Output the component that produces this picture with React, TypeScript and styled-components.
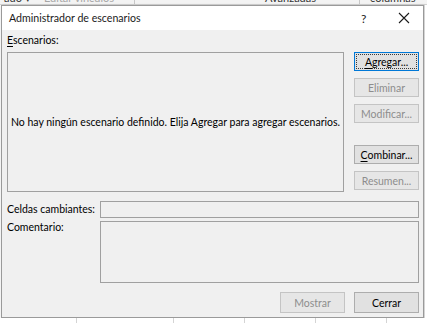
import React from 'react'
import styled, { createGlobalStyle, css } from 'styled-components'

const GlobalStyle = createGlobalStyle`
  html, body {
    margin: 0;
    padding: 0;
  }
  body {
    font-family: Lato, 'Liberation Sans', sans-serif;
  }
`

const Mnemonic = ({ text }: { text: string }) => (
  <>
    <u>{text[0]}</u>
    {text.slice(1)}
  </>
)

const App = () => {
  return (
    <Screen>
      <GlobalStyle />
      <Ribbon>
        <RibbonItem $width={40}>ado ▾</RibbonItem>
        <RibbonItem $muted $width={88}>
          Editar vínculos
        </RibbonItem>
        <RibbonSep />
        <RibbonItem $width={120} />
        <RibbonItem $width={92}>Avanzadas</RibbonItem>
        <RibbonSep />
        <RibbonItem $width={60}>columnas</RibbonItem>
      </Ribbon>
      <Stage>
        <Dialog>
          <TitleBar>
            <Title>Administrador de escenarios</Title>
            <TitleControls>
              <HelpGlyph>?</HelpGlyph>
              <CloseGlyph viewBox="0 0 12 12" width="12" height="12">
                <path d="M1 1 L11 11 M11 1 L1 11" stroke="#1a1a1a" strokeWidth="1.1" />
              </CloseGlyph>
            </TitleControls>
          </TitleBar>
          <Body>
            <Label>
              <Mnemonic text="Escenarios:" />
            </Label>
            <ScenarioRow>
              <ListBox>
                No hay ningún escenario definido. Elija Agregar para agregar
                escenarios.
              </ListBox>
              <ButtonColumn>
                <Button $focused>
                  <FocusRing>
                    <Mnemonic text="Agregar..." />
                  </FocusRing>
                </Button>
                <Button disabled>Eliminar</Button>
                <Button disabled>Modificar...</Button>
                <Spacer />
                <Button>
                  <Mnemonic text="Combinar..." />
                </Button>
                <Button disabled>Resumen...</Button>
              </ButtonColumn>
            </ScenarioRow>
            <Fields>
              <FieldLabel $lineHeight={17}>Celdas cambiantes:</FieldLabel>
              <Field $height={17} />
              <FieldLabel $lineHeight={12}>Comentario:</FieldLabel>
              <Field $height={62} />
            </Fields>
            <Footer>
              <Button disabled $tall>
                Mostrar
              </Button>
              <Button $tall>Cerrar</Button>
            </Footer>
          </Body>
        </Dialog>
        <SheetEdge />
      </Stage>
      <Sheet>
        {[76, 96, 70, 70, 70].map((w, i) => (
          <SheetCell key={i} $width={w} />
        ))}
      </Sheet>
    </Screen>
  )
}

export default App

const Screen = styled.div`
  width: 427px;
  height: 323px;
  overflow: hidden;
  display: flex;
  flex-direction: column;
  background: #ffffff;
  color: #000;
  font-size: 10.5px;
`

const Ribbon = styled.div`
  height: 5px;
  flex: none;
  overflow: hidden;
  display: flex;
  align-items: flex-start;
  background: #f3f3f3;
  border-bottom: 1px solid #d4d4d4;
  box-sizing: border-box;
`

const RibbonItem = styled.div<{ $muted?: boolean; $width: number }>`
  flex: none;
  margin-top: -9px;
  padding-left: 4px;
  box-sizing: border-box;
  width: ${({ $width }) => $width}px;
  overflow: hidden;
  font-size: 11px;
  line-height: 14px;
  white-space: nowrap;
  color: ${({ $muted }) => ($muted ? '#a6a6a6' : '#333')};
`

const RibbonSep = styled.div`
  flex: none;
  width: 1px;
  height: 5px;
  background: #c8c8c8;
  margin: 0 6px;
`

const Stage = styled.div`
  display: flex;
  flex: none;
`

const Dialog = styled.div`
  width: 423px;
  height: 313px;
  margin-left: 1px;
  box-sizing: border-box;
  border: 1px solid #9a9a9a;
  display: flex;
  flex-direction: column;
  background: #f0f0f0;
  box-shadow: 1px 1px 3px rgba(0, 0, 0, 0.25);
`

const SheetEdge = styled.div`
  flex: 1;
  background: #ffffff;
  border-left: 1px solid #d4d4d4;
`

const TitleBar = styled.div`
  height: 24px;
  flex: none;
  background: #ffffff;
  display: flex;
  align-items: center;
  padding-left: 7px;
`

const Title = styled.div`
  flex: 1;
  font-size: 10.6px;
  color: #1a1a1a;
`

const TitleControls = styled.div`
  display: flex;
  align-items: center;
`

const HelpGlyph = styled.span`
  font-size: 12px;
  color: #1a1a1a;
  width: 37px;
`

const CloseGlyph = styled.svg`
  margin-right: 13px;
`

const Body = styled.div`
  flex: 1;
  display: flex;
  flex-direction: column;
  padding: 3px 4px 0 5px;
`

const Label = styled.div`
  height: 14px;
  line-height: 14px;
  white-space: nowrap;

  u {
    text-decoration-thickness: 1px;
    text-underline-offset: 2px;
  }
`

const ScenarioRow = styled.div`
  display: flex;
  margin-top: 5px;
`

const ListBox = styled.div`
  width: 337px;
  height: 140px;
  box-sizing: border-box;
  border: 1px solid #a0a0a0;
  background: #f0f0f0;
  display: flex;
  align-items: center;
  justify-content: center;
  text-align: center;
  white-space: nowrap;
  overflow: hidden;
`

const ButtonColumn = styled.div`
  display: flex;
  flex-direction: column;
  gap: 7px;
  margin-left: 10px;
`

const Spacer = styled.div`
  height: 8px;
`

const disabledLook = css`
  background: #e6e6e6;
  border-color: #c4c4c4;
  color: #8d8d8d;
`

const Button = styled.button<{ $focused?: boolean; $tall?: boolean }>`
  width: 65px;
  height: ${({ $tall }) => ($tall ? 21 : 19)}px;
  box-sizing: border-box;
  padding: 0;
  border: 1px solid ${({ $focused }) => ($focused ? '#0078d7' : '#adadad')};
  background: #e1e1e1;
  font-family: inherit;
  font-size: 10.5px;
  color: #000;
  display: flex;
  align-items: center;
  justify-content: center;
  white-space: nowrap;

  &:disabled {
    ${disabledLook};
  }

  u {
    text-decoration-thickness: 1px;
    text-underline-offset: 2px;
  }
`

const FocusRing = styled.span`
  box-sizing: border-box;
  align-self: stretch;
  flex: 1;
  margin: 1px;
  border: 1px dotted #3a3a3a;
  display: flex;
  align-items: center;
  justify-content: center;
`

const Fields = styled.div`
  display: grid;
  grid-template-columns: 93px 319px;
  row-gap: 3px;
  margin-top: 9px;
`

const FieldLabel = styled.div<{ $lineHeight: number }>`
  line-height: ${({ $lineHeight }) => $lineHeight}px;
  white-space: nowrap;
`

const Field = styled.div<{ $height: number }>`
  height: ${({ $height }) => $height}px;
  box-sizing: border-box;
  border: 1px solid #a0a0a0;
  background: #f0f0f0;
`

const Footer = styled.div`
  display: flex;
  justify-content: flex-end;
  gap: 9px;
  margin-top: 9px;
`

const Sheet = styled.div`
  flex: 1;
  display: flex;
  background: #ffffff;
`

const SheetCell = styled.div<{ $width: number }>`
  width: ${({ $width }) => $width}px;
  flex: none;
  border-right: 1px solid #d4d4d4;
`
